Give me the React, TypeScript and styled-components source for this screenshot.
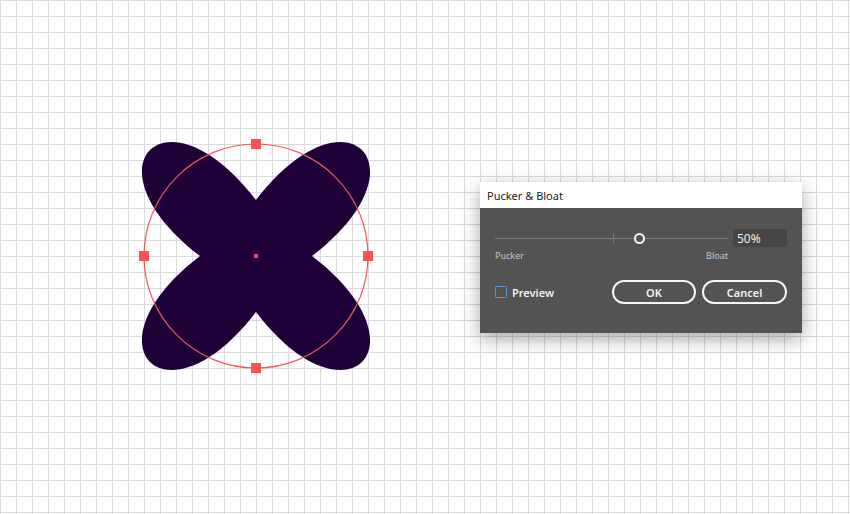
import React from 'react';
import styled, { createGlobalStyle } from 'styled-components';

const GlobalStyle = createGlobalStyle`
  html, body {
    margin: 0;
    padding: 0;
  }
  body {
    font-family: 'Segoe UI', 'Noto Sans', 'Open Sans', sans-serif;
  }
`;

const Page = styled.div`
  width: 850px;
  height: 514px;
  overflow: hidden;
  display: flex;
  align-items: flex-start;
  background-color: #ffffff;
  background-image: linear-gradient(to right, #dadada 1px, transparent 1px),
    linear-gradient(to bottom, #dadada 1px, transparent 1px);
  background-size: 16px 16px;
`;

const Artwork = styled.svg`
  display: block;
  flex: 0 0 auto;
  margin-left: 130px;
  margin-top: 130px;
`;

const Dialog = styled.div`
  flex: 0 0 auto;
  width: 322px;
  margin-left: 90px;
  margin-top: 182px;
  box-shadow: 0 6px 18px rgba(0, 0, 0, 0.35);
`;

const TitleBar = styled.div`
  height: 26px;
  background: #ffffff;
  display: flex;
  align-items: center;
  padding-left: 7px;
  font-size: 11px;
  color: #222;
`;

const Body = styled.div`
  height: 125px;
  box-sizing: border-box;
  background: #535353;
  padding: 21px 15px 0 15px;
  display: flex;
  flex-direction: column;
`;

const SliderRow = styled.div`
  display: flex;
  align-items: center;
  gap: 5px;
  height: 18px;
`;

const Track = styled.div`
  position: relative;
  flex: 1;
  height: 1px;
  background: #7c7c7c;
`;

const Tick = styled.div`
  position: absolute;
  top: -4px;
  width: 1px;
  height: 9px;
  background: #7c7c7c;
`;

const Thumb = styled.div`
  position: absolute;
  top: -5px;
  width: 7px;
  height: 7px;
  border: 2px solid #f2f2f2;
  border-radius: 50%;
  background: #535353;
`;

const ValueBox = styled.div`
  width: 54px;
  height: 18px;
  box-sizing: border-box;
  background: #454545;
  color: #ececec;
  font-size: 12px;
  display: flex;
  align-items: center;
  padding-left: 4px;
`;

const LabelRow = styled.div`
  display: flex;
  justify-content: space-between;
  width: 233px;
  margin-top: 2px;
  font-size: 9px;
  color: #c4c4c4;
`;

const ActionRow = styled.div`
  display: flex;
  align-items: center;
  margin-top: 18px;
`;

const Check = styled.div`
  width: 10px;
  height: 10px;
  border: 1px solid #5d8fc9;
  border-radius: 1px;
`;

const CheckLabel = styled.span`
  margin-left: 5px;
  font-size: 11px;
  font-weight: 600;
  color: #f0f0f0;
`;

const Spacer = styled.div`
  flex: 1;
`;

const PillButton = styled.div<{ $width: number }>`
  width: ${(p) => p.$width}px;
  height: 24px;
  box-sizing: border-box;
  border: 2px solid #f4f4f4;
  border-radius: 12px;
  display: flex;
  align-items: center;
  justify-content: center;
  font-size: 11px;
  font-weight: 600;
  color: #f4f4f4;
  & + & {
    margin-left: 6px;
  }
`;

const handles: [number, number][] = [
  [256, 144],
  [144, 256],
  [368, 256],
  [256, 368],
];

const shapePath =
  'M256 200 C346 82 430 166 312 256 C430 346 346 430 256 312 C166 430 82 346 200 256 C82 166 166 82 256 200 Z';

const App = () => {
  return (
    <>
      <GlobalStyle />
      <Page>
        <Artwork width={260} height={250} viewBox="130 130 260 250">
          <path d={shapePath} fill="#1e0038" />
          <circle cx={256} cy={256} r={112} fill="none" stroke="#f25757" strokeWidth={1.2} />
          {handles.map(([x, y], i) => (
            <rect key={i} x={x - 5} y={y - 5} width={10} height={10} fill="#ff5050" />
          ))}
          <rect x={254} y={254} width={4} height={4} fill="#ff5050" />
        </Artwork>
        <Dialog>
          <TitleBar>Pucker &amp; Bloat</TitleBar>
          <Body>
            <SliderRow>
              <Track>
                <Tick style={{ left: 118 }} />
                <Thumb style={{ left: 139 }} />
              </Track>
              <ValueBox>50%</ValueBox>
            </SliderRow>
            <LabelRow>
              <span>Pucker</span>
              <span>Bloat</span>
            </LabelRow>
            <ActionRow>
              <Check />
              <CheckLabel>Preview</CheckLabel>
              <Spacer />
              <PillButton $width={84}>OK</PillButton>
              <PillButton $width={85}>Cancel</PillButton>
            </ActionRow>
          </Body>
        </Dialog>
      </Page>
    </>
  );
};

export default App;
